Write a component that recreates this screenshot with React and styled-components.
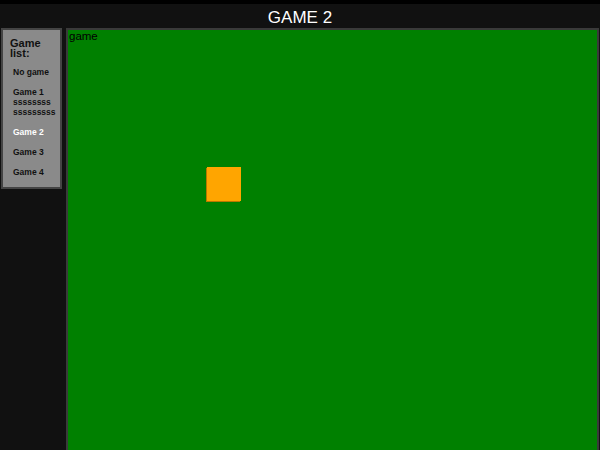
import React, { useState } from "react";
import styled, { createGlobalStyle } from "styled-components";

const GlobalStyle = createGlobalStyle`
  html, body {
    margin: 0;
    padding: 0;
    background: #111111;
    font-family: "Liberation Sans", Arial, sans-serif;
    overflow: hidden;
  }
`;

const Page = styled.div`
  display: flex;
  flex-direction: column;
  height: 100vh;
`;

const Header = styled.header`
  box-sizing: border-box;
  height: 28px;
  border-top: 4px solid #000;
  padding-top: 3px;
  background: #111111;
  color: #fff;
  font-size: 17px;
  line-height: 21px;
  text-align: center;
`;

const Body = styled.div`
  display: flex;
  align-items: flex-start;
  gap: 4px;
  padding-left: 1px;
  padding-right: 1px;
  flex: 1;
  min-height: 0;
`;

const Sidebar = styled.aside`
  box-sizing: border-box;
  width: 61px;
  padding: 8px 7px 5px;
  background: #8a8a8a;
  border: 2px solid #444;
`;

const Heading = styled.div`
  font-size: 11px;
  font-weight: bold;
  line-height: 10px;
  color: #111;
  margin-bottom: 4px;
`;

const GameItem = styled.div`
  padding: 5px 0 5px 3px;
  font-size: 8.5px;
  font-weight: bold;
  line-height: 10px;
  color: ${(p) => (p.$active ? "#fff" : "#111")};
  cursor: pointer;
`;

const Stage = styled.main`
  position: relative;
  box-sizing: border-box;
  flex: 1;
  height: 440px;
  padding: 0 1px;
  background: #008000;
  border: 2px solid #3a3a3a;
  border-bottom: none;
`;

const StageLabel = styled.div`
  font-size: 11.5px;
  line-height: 12px;
  color: #000;
`;

const Player = styled.div`
  position: absolute;
  width: 34px;
  height: 34px;
  background: #ffa500;
  box-shadow: -1px 1px 0 #b87800;
`;

const games = [
  { id: 0, name: "No game" },
  { id: 1, name: "Game 1 ssssssss sssssssss" },
  { id: 2, name: "Game 2" },
  { id: 3, name: "Game 3" },
  { id: 4, name: "Game 4" },
];

export default function App() {
  const [current, setCurrent] = useState(2);
  const pos = { x: 139, y: 137 };

  return (
    <Page>
      <GlobalStyle />
      <Header>GAME {current}</Header>
      <Body>
        <Sidebar>
          <Heading>Game list:</Heading>
          {games.map((g) => (
            <GameItem
              key={g.id}
              $active={g.id === current}
              onClick={() => setCurrent(g.id)}
            >
              {g.name}
            </GameItem>
          ))}
        </Sidebar>
        <Stage>
          <StageLabel>game</StageLabel>
          <Player style={{ left: pos.x, top: pos.y }} />
        </Stage>
      </Body>
    </Page>
  );
}
